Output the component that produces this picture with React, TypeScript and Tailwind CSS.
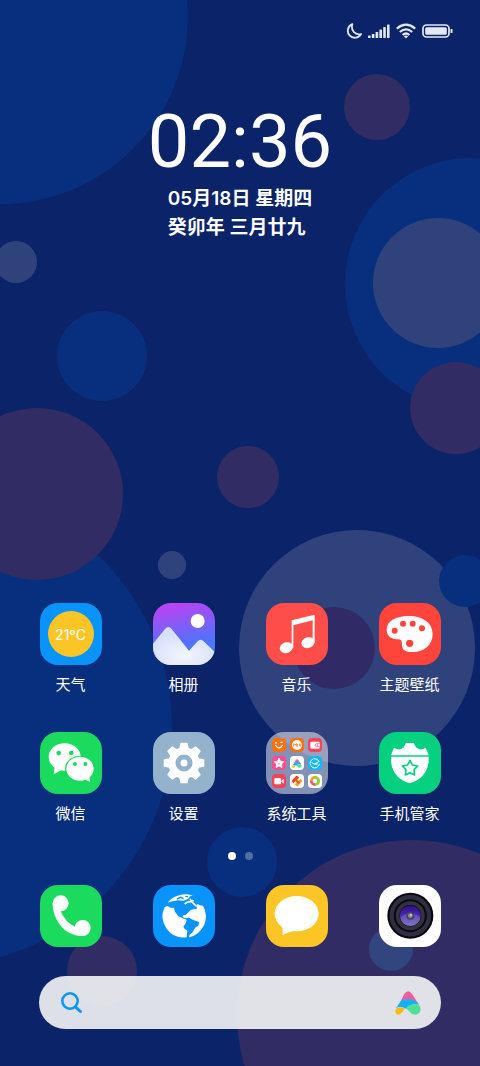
import type { FC, ReactNode } from 'react'

type Bubble = { cx: number; cy: number; r: number; fill: string }

const BLUE = '#082f7d'
const MAROON = '#312d64'
const SLATE = '#30427b'

const bubbles: Bubble[] = [
  { cx: 0, cy: 16, r: 188, fill: BLUE },
  { cx: 377, cy: 107, r: 33, fill: MAROON },
  { cx: 471, cy: 284, r: 126, fill: BLUE },
  { cx: 438, cy: 283, r: 65, fill: SLATE },
  { cx: 456, cy: 408, r: 46, fill: MAROON },
  { cx: 16, cy: 262, r: 21, fill: SLATE },
  { cx: 102, cy: 356, r: 45, fill: BLUE },
  { cx: -67, cy: 728, r: 239, fill: BLUE },
  { cx: 37, cy: 494, r: 86, fill: MAROON },
  { cx: 248, cy: 477, r: 31, fill: MAROON },
  { cx: 172, cy: 565, r: 14, fill: SLATE },
  { cx: 357, cy: 648, r: 118, fill: SLATE },
  { cx: 334, cy: 648, r: 41, fill: '#302b66' },
  { cx: 465, cy: 581, r: 26, fill: BLUE },
  { cx: 242, cy: 862, r: 35, fill: BLUE },
  { cx: 412, cy: 1015, r: 175, fill: MAROON },
  { cx: 391, cy: 949, r: 22, fill: '#31457f' },
  { cx: 102, cy: 971, r: 35, fill: MAROON },
]

const Wallpaper: FC = () => (
  <svg
    className="absolute inset-0 -z-10 h-full w-full"
    viewBox="0 0 480 1066"
    preserveAspectRatio="xMidYMid slice"
    aria-hidden="true"
  >
    {bubbles.map((b, i) => (
      <circle key={i} cx={b.cx} cy={b.cy} r={b.r} fill={b.fill} />
    ))}
  </svg>
)

const StatusBar: FC = () => (
  <header className="flex h-[62px] items-center justify-end pr-[27px] text-[#e3e7f3]">
    <svg className="mr-[6px] h-4 w-4" viewBox="0 0 16 16" fill="none" stroke="currentColor" strokeWidth="1.8" strokeLinejoin="round">
      <path d="M6.3 1.2A7 7 0 1 0 15 11C9.5 12.5 4.5 8 6.3 1.2Z" />
    </svg>
    <svg className="mr-[6px] h-4 w-[22px]" viewBox="0 0 22 16" fill="currentColor">
      <rect x="0" y="12.5" width="2.6" height="2.5" rx=".6" />
      <rect x="3.8" y="11" width="2.6" height="4" rx=".6" />
      <rect x="7.6" y="9" width="2.6" height="6" rx=".6" />
      <rect x="11.4" y="6.5" width="2.6" height="8.5" rx=".6" />
      <rect x="15.2" y="4" width="2.6" height="11" rx=".6" />
      <rect x="19" y="1.5" width="2.6" height="13.5" rx=".6" />
    </svg>
    <svg className="mr-[6px] h-4 w-5" viewBox="0 0 20 16" fill="none" stroke="currentColor" strokeWidth="2.2">
      <path d="M.8 5.6Q10-2.2 19.2 5.6M3.8 9Q10 3.6 16.2 9M6.6 12Q10 9 13.4 12" />
      <path d="M7.8 13.2Q10 11.8 12.2 13.2L10 15.4Z" fill="currentColor" stroke="none" />
    </svg>
    <svg className="h-[14px] w-[31px]" viewBox="0 0 31 14" fill="none">
      <rect x="1" y="1" width="26" height="12" rx="3.5" stroke="currentColor" strokeWidth="1.7" />
      <rect x="3.2" y="3.2" width="21.6" height="7.6" rx="1.5" fill="currentColor" />
      <path d="M29.5 5v4" stroke="currentColor" strokeWidth="2" />
    </svg>
  </header>
)

const Clock: FC = () => (
  <section className="mt-[38px] flex flex-col items-center font-['Inter','Noto_Sans_CJK_SC',sans-serif] text-white">
    <time className="font-['Roboto',sans-serif] text-[74px] leading-[84px]">02:36</time>
    <p className="text-[19px] leading-[29px] font-semibold">
      05月18日 星期四
      <br />
      癸卯年 三月廿九
    </p>
  </section>
)

const Weather: FC = () => (
  <span className="flex h-full w-full items-center justify-center bg-[#0894fa]">
    <span className="flex h-[46px] w-[46px] items-center justify-center rounded-full bg-[#fbc525] font-['Inter',sans-serif] text-[14px] text-white">
      21ºC
    </span>
  </span>
)

// every app drawing shares one 186 unit square
const Glyph: FC<{ bg: string; children: ReactNode }> = ({ bg, children }) => (
  <svg className="h-full w-full" viewBox="0 0 186 186" fill="#fff" aria-hidden="true">
    <rect width="186" height="186" fill={bg} />
    {children}
  </svg>
)

const Gallery: FC = () => (
  <Glyph bg="url(#sky)">
    <defs>
      <linearGradient id="sky" x1=".4" y1="0" x2=".6" y2="1">
        <stop offset="0" stopColor="#bb43f3" />
        <stop offset=".65" stopColor="#5272fb" />
        <stop offset="1" stopColor="#3f80ff" />
      </linearGradient>
      <radialGradient id="snow" cx=".5" cy=".75" r=".6">
        <stop offset="0" stopColor="#f4f6fe" />
        <stop offset="1" stopColor="#d6e0fb" />
      </radialGradient>
    </defs>
    <circle cx="134" cy="54" r="21" />
    <path
      fill="url(#snow)"
      d="M0 122L36 78Q46 66 56 78L108 143L134 115Q143 106 152 115L186 148V186H0Z"
    />
  </Glyph>
)

const Music: FC = () => (
  <Glyph bg="#ff4e49">
    <path d="M77 52L146 35V119H140V52L82 67V134H77Z" />
    <ellipse cx="61" cy="134" rx="20" ry="16" transform="rotate(-18 61 134)" />
    <ellipse cx="126" cy="119" rx="20" ry="16" transform="rotate(-18 126 119)" />
  </Glyph>
)

const Themes: FC = () => (
  <Glyph bg="#ff443b">
    <path d="M23 80C23 54 52 39 88 39C134 39 161 61 161 93C161 127 134 147 103 147C85 148 74 145 70 133C67 121 72 110 58 109C42 108 23 104 23 80Z" />
    <g fill="#ff443b">
      <circle cx="47" cy="83" r="9" />
      <circle cx="72" cy="62" r="9" />
      <circle cx="101" cy="62" r="9" />
      <circle cx="129" cy="76" r="9" />
      <circle cx="92" cy="121" r="11" />
    </g>
  </Glyph>
)

const WeChat: FC = () => (
  <Glyph bg="#1bdb5f">
    <ellipse cx="74" cy="75" rx="48" ry="41" />
    <path d="M44 103L41 127L66 113Z" />
    <ellipse cx="120" cy="110" rx="45" ry="39" fill="#1bdb5f" />
    <ellipse cx="120" cy="110" rx="41" ry="36" />
    <path d="M132 141L151 150L147 132Z" />
    <g fill="#1bdb5f">
      <circle cx="56" cy="63" r="7" />
      <circle cx="94" cy="63" r="7" />
      <circle cx="105" cy="96" r="6" />
      <circle cx="136" cy="96" r="6" />
    </g>
  </Glyph>
)

const Settings: FC = () => (
  <Glyph bg="#94b2cb">
    {[0, 45, 90, 135, 180, 225, 270, 315].map((deg) => (
      <path key={deg} d="M77 56L82 34Q82 32 84 32H102Q104 32 104 34L109 56Z" transform={`rotate(${deg} 93 93)`} />
    ))}
    <circle cx="93" cy="93" r="47" />
    <circle cx="93" cy="93" r="18" fill="none" stroke="#94b2cb" strokeWidth="15" />
  </Glyph>
)

const Security: FC = () => (
  <Glyph bg="#04d080">
    <path d="M36 69L45 47Q62 58 74 46Q79 41 80 33H105Q106 41 111 46Q124 58 140 47L149 69V82C149 120 126 144 92 154C59 144 36 120 36 82Z" />
    <path d="M34 72H152" stroke="#04d080" strokeWidth="4" />
    <path
      fill="none"
      stroke="#04d080"
      strokeWidth="5"
      strokeLinejoin="round"
      d="M93 85L100 99L116 102L105 113L107 129L93 122L79 129L81 113L70 102L86 99Z"
    />
  </Glyph>
)

const miniBase = 'h-[14px] w-[14px] rounded-[4px]'

const Folder: FC = () => (
  <span className="grid h-full w-full grid-cols-3 gap-1 bg-white/50 p-[6px]">
    <svg className={`${miniBase} bg-[#ff7011]`} viewBox="0 0 42 42" fill="none" stroke="#fff" strokeWidth="4" strokeLinecap="round">
      <path d="M11 22Q21 37 31 22" />
      <circle cx="12" cy="14" r="1" />
      <path d="M26 13H31" />
    </svg>
    <svg className={`${miniBase} bg-[#ff7011]`} viewBox="0 0 42 42">
      <circle cx="21" cy="21" r="15" fill="#fff" />
      <path d="M11 26V17L15 21L19 17V26M23 17V26M28 17V23Q30 27 33 23V17" fill="none" stroke="#ff7011" strokeWidth="2.5" />
    </svg>
    <svg className={`${miniBase} bg-[#f4435a]`} viewBox="0 0 42 42">
      <rect x="7" y="11" width="28" height="21" rx="3" fill="#fff" />
      <path d="M35 17H26a4 4 0 0 0 0 9H35" fill="#fff" stroke="#f4435a" strokeWidth="2" />
      <circle cx="28" cy="21" r="2" fill="#f4435a" />
    </svg>
    <svg className={`${miniBase} bg-[#fa4d8c]`} viewBox="0 0 42 42">
      <path d="M21 6L25.5 15.5L36 17L28.5 24.5L30 35L21 30L12 35L13.5 24.5L6 17L16.5 15.5Z" fill="#fff" stroke="#fff" strokeWidth="2" strokeLinejoin="round" />
      <path d="M17 22Q21 27 25 22" fill="none" stroke="#fa4d8c" strokeWidth="2" />
    </svg>
    <span className={`${miniBase} flex items-center justify-center bg-white`}>
      <Spectrum className="h-[9px] w-[10px]" />
    </span>
    <svg className={`${miniBase} bg-[#14b9f6]`} viewBox="0 0 42 42" fill="none" stroke="#fff" strokeWidth="3" strokeLinecap="round">
      <path d="M33 16A14 14 0 1 0 34 25" />
      <path d="M12 21L20 24L31 18M20 24L28 24" />
    </svg>
    <svg className={`${miniBase} bg-[#f4435a]`} viewBox="0 0 42 42" fill="#fff">
      <rect x="7" y="12" width="20" height="19" rx="3" />
      <path d="M28 20L35 14V29L28 23Z" />
    </svg>
    <svg className={`${miniBase} bg-white`} viewBox="0 0 42 42" fill="none" strokeWidth="7" strokeLinejoin="round">
      <path d="M29 17L33 21L22 33L17 28" stroke="#ffa01e" />
      <path d="M13 25L9 21L20 9L25 14" stroke="#f43d20" />
      <path d="M14 15L28 27" stroke="#f4541e" strokeWidth="8" />
    </svg>
    <svg className={`${miniBase} bg-white`} viewBox="0 0 42 42" fill="none" strokeWidth="8">
      <path d="M21 10A11 11 0 0 0 10 21" stroke="#ff9d2a" />
      <path d="M10 21A11 11 0 0 0 21 32" stroke="#f8517f" />
      <path d="M21 32A11 11 0 0 0 21 10" stroke="#8fce2c" />
    </svg>
  </span>
)

const Phone: FC = () => (
  <Glyph bg="#1bdb5f">
    <circle cx="62" cy="55" r="24" />
    <circle cx="128" cy="129" r="24" />
    <path d="M38 55C37 105 76 155 128 153L106 126Q76 112 62 79Z" />
  </Glyph>
)

const Browser: FC = () => (
  <Glyph bg="#0894fa">
    <path d="M35 66L44 63L52 68L62 68L67 82L76 94L92 101L101 104L99 113L91 125L95 132L103 137L101 157A64 64 0 0 1 35 66Z" />
    <path d="M108 157A64 64 0 0 0 150 62L140 61L134 57L130 63L132 71L126 72L114 74L103 85L98 90L90 91L89 96L96 100L108 98L121 105L138 111L137 121L126 129L119 142L110 149Z" />
    <path d="M44 53Q58 34 84 29Q103 26 119 32L111 34L105 42L92 47L76 46L58 49Z" />
    <path d="M72 42L83 37L92 41M97 34L105 35" fill="none" stroke="#0894fa" strokeWidth="4" />
    <path d="M111 42L116 50L123 57L130 63M113 50L102 52L95 57M117 46L122 49" fill="none" stroke="#fff" strokeWidth="5" />
  </Glyph>
)

const Messages: FC = () => (
  <Glyph bg="#fbc525">
    <ellipse cx="92" cy="86" rx="66" ry="53" />
    <path d="M46 120Q52 128 49 151Q62 142 88 138Z" />
  </Glyph>
)

const Camera: FC = () => (
  <Glyph bg="#fff">
    <defs>
      <linearGradient id="lens" x1="0" y1="0" x2="0" y2="1">
        <stop offset="0" stopColor="#25107a" />
        <stop offset=".45" stopColor="#4a23b8" />
        <stop offset="1" stopColor="#8f86dc" />
      </linearGradient>
    </defs>
    <circle cx="94" cy="92" r="69" fill="#08070c" />
    <circle cx="94" cy="92" r="56" fill="none" stroke="#2f2e40" strokeWidth="13" />
    <circle cx="94" cy="92" r="47" fill="#0b0a10" />
    <circle cx="94" cy="92" r="38" fill="none" stroke="#34333c" strokeWidth="11" />
    <circle cx="94" cy="92" r="31" fill="url(#lens)" />
    <path d="M64 100A31 31 0 0 0 124 100Q110 82 94 86Q78 82 64 100Z" fill="#7168b4" opacity=".6" />
    <circle cx="94" cy="92" r="12" fill="#464354" />
    <circle cx="94" cy="92" r="7" fill="#8c899c" />
    <circle cx="96" cy="90" r="3" fill="#d5d3df" />
  </Glyph>
)

const Spectrum: FC<{ className: string }> = ({ className }) => (
  <svg className={className} viewBox="0 0 76 70" aria-hidden="true">
    <path d="M16 31L27 9Q38-7 50 9L69 39Q42 18 16 31Z" fill="#f25c9b" />
    <path d="M3 51L16 30Q40 16 64 32L70 40L56 39Q43 40 31 52L24 48Q12 45 3 51Z" fill="#12b3fb" />
    <path d="M31 51Q46 38 63 38Q75 42 75 54Q73 68 59 69Q49 69 42 60Q38 54 31 51Z" fill="#4fe096" />
    <path d="M1 55Q6 47 20 48L29 50Q22 64 13 69Q-1 70 1 55Z" fill="#fdb90c" />
  </svg>
)

type App = { name: string; icon: ReactNode }

const apps: App[] = [
  { name: '天气', icon: <Weather /> },
  { name: '相册', icon: <Gallery /> },
  { name: '音乐', icon: <Music /> },
  { name: '主题壁纸', icon: <Themes /> },
  { name: '微信', icon: <WeChat /> },
  { name: '设置', icon: <Settings /> },
  { name: '系统工具', icon: <Folder /> },
  { name: '手机管家', icon: <Security /> },
]

const dock: App[] = [
  { name: '电话', icon: <Phone /> },
  { name: '浏览器', icon: <Browser /> },
  { name: '短信', icon: <Messages /> },
  { name: '相机', icon: <Camera /> },
]

const Tile: FC<{ children: ReactNode }> = ({ children }) => (
  <span className="block h-[62px] w-[62px] overflow-hidden rounded-[18px]">{children}</span>
)

export default function App() {
  return (
    <main className="relative isolate flex min-h-screen flex-col overflow-hidden bg-[#0b2369] font-['Noto_Sans_CJK_SC',sans-serif]" lang="zh-CN">
      <Wallpaper />
      <StatusBar />
      <Clock />

      <div className="mt-auto grid grid-cols-4 gap-y-[38px] px-[14px] pt-10">
        {apps.map((app) => (
          <button key={app.name} type="button" className="flex flex-col items-center gap-[9px]">
            <Tile>{app.icon}</Tile>
            <span className="text-[15px] leading-5 text-white">{app.name}</span>
          </button>
        ))}
      </div>

      <div className="mt-[29px] flex justify-center gap-[9px]">
        <span className="h-2 w-2 rounded-full bg-white" />
        <span className="h-2 w-2 rounded-full bg-white/30" />
      </div>

      <nav className="mt-[25px] grid grid-cols-4 px-[14px]">
        {dock.map((app) => (
          <button key={app.name} type="button" aria-label={app.name} className="flex justify-center">
            <Tile>{app.icon}</Tile>
          </button>
        ))}
      </nav>

      <form className="mx-[39px] mt-[29px] mb-[37px] flex h-[53px] items-center rounded-full bg-[#f0f1f3]/92 px-[20px]">
        <svg className="h-6 w-6" viewBox="0 0 24 24" fill="none" stroke="#0894fa" strokeWidth="2.5" strokeLinecap="round" aria-hidden="true">
          <circle cx="11" cy="10" r="7.7" />
          <path d="M16.5 16L21.5 20.5" strokeWidth="3" />
        </svg>
        <input type="search" aria-label="搜索" className="mx-3 h-full min-w-0 flex-1 bg-transparent text-base text-gray-900 outline-none" />
        <button type="button" aria-label="小爱同学">
          <Spectrum className="h-6 w-[26px]" />
        </button>
      </form>
    </main>
  )
}
